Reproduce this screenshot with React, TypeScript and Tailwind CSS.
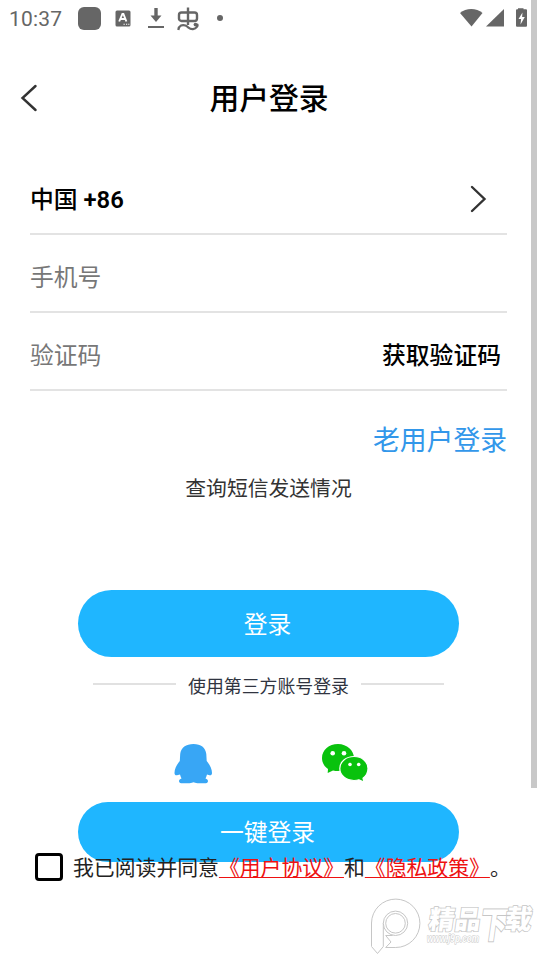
import React from 'react';

const StatusBar: React.FC = () => (
  <div className="h-[38px] flex items-center justify-between pl-[9px] pr-[10px] text-[#666]">
    <div className="flex items-center">
      <span className="w-[69px] font-['Roboto',sans-serif] text-[21px] leading-none tracking-[0.2px]">10:37</span>
      <div className="w-[23px] h-[23px] -mt-[2px] rounded-[6px] bg-[#666]" />
      <svg className="ml-[14px] -mt-[2px]" width="16" height="17" viewBox="0 0 16 17">
        <rect x="0.5" y="0.5" width="15" height="16" rx="1.5" fill="#666" />
        <path d="M4.2 11.5 7.4 4h1l3 7.5M5.5 9h4.8" fill="none" stroke="#fff" strokeWidth="1.9" />
        <path d="M8.5 14.2h1.3M11 14.2h1.2M13.2 14.2h1.2" stroke="#fff" strokeWidth="1.1" />
      </svg>
      <svg className="ml-[17px] -mt-[1px]" width="16" height="21" viewBox="0 0 16 21">
        <path d="M8 0v9" stroke="#666" strokeWidth="3.4" />
        <path d="M2.5 7.5h11L8 14z" fill="#666" />
        <path d="M0 19h16" stroke="#666" strokeWidth="2" />
      </svg>
      <svg className="ml-[13px] -mt-[1px]" width="23" height="24" viewBox="0 0 23 24" fill="none" stroke="#666" strokeWidth="2.4">
        <rect x="2" y="5.5" width="18" height="8.5" rx="2.5" />
        <path d="M11 0.5V18" />
        <path d="M1.3 23C2 18.5 5.5 17.2 8.5 18.6s4 4 7.5 3.5 5.5-3.5 4-5.2" strokeWidth="2.2" />
        <circle cx="18.5" cy="17.6" r="1.9" fill="#666" stroke="none" />
      </svg>
      <div className="ml-[17px] -mt-[2px] w-[6px] h-[6px] rounded-full bg-[#666]" />
    </div>
    <svg className="mb-[3px]" width="67" height="20" viewBox="0 0 67 20" fill="#666">
      <path d="M0 5C6-.3 16.5-.3 22.5 5L11.5 18.5z" />
      <path d="M26 18.5 44 1v17.5z" />
      <path d="M58 1.2V.2h5.500v1H66a1 1 0 0 1 1 1v15.500a1 1 0 0 1-1 1H57a1 1 0 0 1-1-1V2.200a1 1 0 0 1 1-1z" />
      <path d="M62.5 4.5 58.5 11h2.600l-.6 5.500 4.300-7.500h-2.700z" fill="#fff" />
    </svg>
  </div>
);

const Chevron: React.FC<{ back?: boolean }> = ({ back }) => (
  <svg width="17" height="28" viewBox="0 0 17 28" fill="none" stroke="#333" strokeWidth="2.4" strokeLinecap="round">
    <path d={back ? 'M15.5 2 2.5 14l13 12' : 'M2 2l12.5 12L2 26'} />
  </svg>
);

const QQIcon: React.FC = () => (
  <svg width="40" height="42" viewBox="0 0 40 42" fill="#38a6f5">
    <path d="M20.5 1C13 1 8 4.500 7.200 11L6.800 18C3.500 22 1.500 26 1.500 30c0 1.800 1 2.500 2.500 2.300L7 31.500c.4 1.500.8 2.800 1.500 4-1.500.7-2.600 1.500-2.500 2.800.2 1.700 1.500 2 4 2h6.500c2 0 3-1 4-1s2 1 4 1H31c2.500 0 3.800-.3 4-2 .1-1.300-1-2.100-2.500-2.800.7-1.200 1.100-2.500 1.500-4l2.500.8c1.500.2 2.500-.5 2.500-2.300 0-4-2-8-5.300-12l-.4-7C32.500 4.500 28 1 20.500 1z" />
  </svg>
);

const WeChatIcon: React.FC = () => (
  <svg width="48" height="40" viewBox="0 0 48 40">
    <path d="M17 1C8 1 1 7 1 15c0 4.500 2.200 8.400 6 11l-.3 4 5.300-2.600c1.800.5 3.200.6 5 .6 9 0 16-5.500 16-13S26 1 17 1z" fill="#09c20d" />
    <path d="M33 13.500c-8 0-14.200 5.200-14.200 12S25 37.500 33 37.500c1.800 0 3.400-.2 5-.7l5 2.300-1-3.900c3-2.200 5-5.700 5-9.700 0-6.800-6-12-14-12z" fill="#09c20d" stroke="#fff" strokeWidth="1.2" />
    <g fill="#fff">
      <circle cx="11.7" cy="10.2" r="2.3" />
      <circle cx="23" cy="10.2" r="2.3" />
      <circle cx="29" cy="21.5" r="1.8" />
      <circle cx="37.7" cy="21.5" r="1.8" />
    </g>
  </svg>
);

const Watermark: React.FC = () => (
  <svg
    className="absolute left-[366px] top-[892px]"
    width="171"
    height="64"
    viewBox="0 0 171 64"
    fill="#fff"
    stroke="#c6c6c6"
    strokeWidth="1"
  >
    <path d="M5.5 54.5V31A24.2 24.2 0 1 1 29.7 55.5H19.7L25 50l-5.3-6.500h7" />
    <path d="M5.5 54.5 11.5 61.5l5.800-7V31" />
    <circle cx="29.5" cy="31.3" r="12.2" />
    <circle cx="29.5" cy="31.3" r="9.8" />
    <g fontFamily="'Noto Sans CJK SC', sans-serif" fontWeight="900" strokeWidth="1.5" paintOrder="stroke" transform="skewX(-8)">
      <text x="67" y="37.5" fontSize="26">精品</text>
      <text x="0" y="0" fontSize="27" transform="translate(119 46) scale(1 1.350)">下</text>
      <text x="143" y="37.5" fontSize="27">载</text>
    </g>
    <text x="61" y="50" fontFamily="'Liberation Sans', sans-serif" fontWeight="700" fontStyle="italic" fontSize="10" textLength="52" lengthAdjust="spacingAndGlyphs" paintOrder="stroke">www.j9p.com</text>
  </svg>
);

const App: React.FC = () => {
  return (
    <div className="relative w-[537px] h-[956px] overflow-hidden bg-white text-black leading-none font-['Roboto','Noto_Sans_CJK_SC',sans-serif]">
      <StatusBar />

      <header className="h-[119px] flex items-center pl-[20px] pr-[20px]">
        <Chevron back />
        <h1 className="flex-1 pt-[2px] pr-[16px] text-center text-[29.8px] font-medium">用户登录</h1>
      </header>

      <main className="pl-[30px] pr-[30px]">
        <div className="h-[78px] flex items-center justify-between border-b-2 border-[#e3e3e3] pt-[8px] pr-[20px]">
          <span className="pt-[4px] text-[23.8px] font-medium">中国 <span className="font-semibold">+86</span></span>
          <Chevron />
        </div>
        <div className="h-[78px] flex items-center border-b-2 border-[#e3e3e3] pt-[12px]">
          <span className="text-[23.8px] text-[#777]">手机号</span>
        </div>
        <div className="h-[78px] flex items-center justify-between border-b-2 border-[#e3e3e3] pt-[11px] pr-[6px]">
          <span className="text-[23.8px] text-[#777]">验证码</span>
          <span className="text-[23.8px] font-medium">获取验证码</span>
        </div>
        <div className="mt-[35px] text-right text-[26.8px] leading-[30px] text-[#3297ea]">老用户登录</div>
      </main>

      <p className="mt-[21px] text-center text-[20.8px] leading-[24px] text-[#333]">查询短信发送情况</p>

      <button className="block mt-[89px] ml-[77.5px] w-[381px] h-[67px] rounded-full bg-[#1fb6ff] pr-[1px] text-[23.8px] leading-[70px] text-white">登录</button>

      <div className="mt-[17px] ml-[93px] w-[351px] h-[22px] flex items-center justify-between">
        <div className="w-[83px] h-[2px] -mt-[2px] bg-[#e1e1e1]" />
        <span className="pt-[3px] text-[17.9px] text-[#303440]">使用第三方账号登录</span>
        <div className="w-[83px] h-[2px] -mt-[2px] bg-[#e1e1e1]" />
      </div>

      <div className="mt-[47px] ml-[173px] flex gap-[108px]">
        <QQIcon />
        <WeChatIcon />
      </div>

      <button className="block mt-[17px] ml-[77.5px] w-[381px] h-[60px] rounded-full bg-[#1fb6ff] pr-[1px] text-[23.8px] leading-[63px] text-white">一键登录</button>

      <label className="relative -mt-[9px] ml-[35px] flex items-center whitespace-nowrap text-[20.85px] text-[#222]">
        <span className="w-[28px] h-[28px] mr-[10px] rounded-[4px] border-[3px] border-black bg-white" />
        <span className="flex pt-[3px]">
          我已阅读并同意
          <span className="text-[#ee1111] underline decoration-1 underline-offset-2">《用户协议》</span>
          和
          <span className="text-[#ee1111] underline decoration-1 underline-offset-2">《隐私政策》</span>
          。
        </span>
      </label>

      <Watermark />
      <div className="absolute right-0 top-0 w-[6px] h-[788px] bg-[#c8c8c8]" />
    </div>
  );
};

export default App;
